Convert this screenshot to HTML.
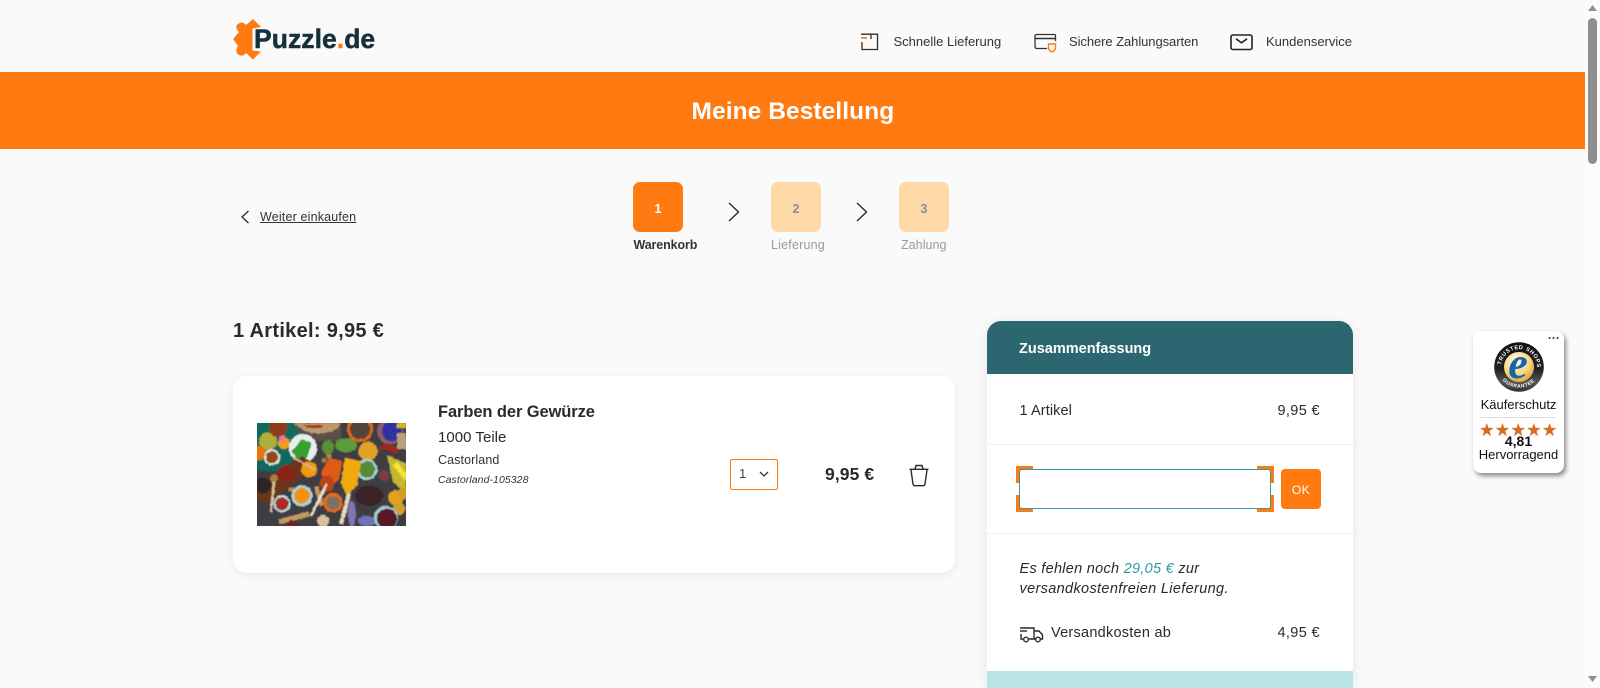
<!DOCTYPE html>
<html lang="de">
<head>
<meta charset="utf-8">
<title>Meine Bestellung - Puzzle.de</title>
<style>
html,body{margin:0;padding:0;width:1600px;height:688px;overflow:hidden;background:#fafafa;font-family:"Liberation Sans",Arial,sans-serif;color:#2a2a2a}
.a{position:absolute;white-space:nowrap}
.t{position:absolute;white-space:nowrap;line-height:1}
svg{position:absolute;display:block;overflow:visible}
#band{left:0;top:72px;width:1585px;height:77px;background:#ff7a10}
.step{width:50px;height:50px;border-radius:7px;text-align:center;line-height:54px;font-size:12.500px;font-weight:bold}
#card{left:233px;top:376px;width:722px;height:197px;background:#fff;border-radius:14px;box-shadow:0 2px 10px rgba(0,0,0,.07)}
#sum{left:987px;top:321px;width:366px;height:367px;background:#fff;border-radius:14px 14px 0 0;box-shadow:0 2px 12px rgba(0,0,0,.09);overflow:hidden}
#sumh{left:987px;top:321px;width:366px;height:53px;background:#2c6771;border-radius:14px 14px 0 0}
#badge{left:1472.500px;top:331px;width:91px;height:142px;background:#fff;border-radius:8px;box-shadow:2px 3px 5px rgba(0,0,0,.45)}
</style>
</head>
<body>
<!-- header -->
<svg style="left:233px;top:19px" width="32" height="41" viewBox="0 0 32 41">
<path fill="#ff7a10" d="M20 0 28 8 19.500 9.500V31.500L28 32.500 20 40.500 13 34Q10 38 6 36 1 33 5 27L0 20 6 13Q1 8 5 5 9 1.500 13 6Z"/>
</svg>
<div class="t" style="left:254px;top:26px;font-size:26.500px;font-weight:bold;color:#17303a;letter-spacing:.05px;-webkit-text-stroke:.5px #17303a">Puzzle<span style="color:#ff7a10;-webkit-text-stroke:.5px #ff7a10">.</span>de</div>

<svg style="left:860px;top:33px" width="19" height="18" viewBox="0 0 19 18" fill="none" stroke="#2d2d2d" stroke-width="1.300">
<path d="M1 1.200H17.500V16.500H2V9"/><path d="M11 1V6"/><path d="M1 5H7" stroke="#ff7a10" stroke-width="1.600"/>
</svg>
<div class="t" style="left:893.500px;top:35px;font-size:13px;letter-spacing:0;color:#333">Schnelle Lieferung</div>
<svg style="left:1034px;top:33px" width="23" height="20" viewBox="0 0 23 20" fill="none" stroke="#333" stroke-width="1.300">
<path d="M13 15.500H3Q1 15.500 1 13.500V3Q1 1.500 3 1.500H20Q21.500 1.500 21.500 3V8"/><path d="M1 5.500H21.500" stroke-width="1.500"/>
<path d="M14.500 11H21.500V15Q21 18 18 19 15 18 14.500 15Z" stroke="#ff7a10" stroke-width="1.400"/>
</svg>
<div class="t" style="left:1069px;top:35px;font-size:13px;letter-spacing:-.07px;color:#333">Sichere Zahlungsarten</div>
<svg style="left:1230px;top:33.500px" width="23" height="16" viewBox="0 0 23 16" fill="none" stroke="#222" stroke-width="1.600">
<rect x="1" y="1" width="21" height="14.500" rx="1.800"/><path d="M6 4.800 11.500 8.800 17 4.800"/>
</svg>
<div class="t" style="left:1266px;top:35px;font-size:13px;letter-spacing:0;color:#333">Kundenservice</div>

<div class="a" id="band"></div>
<h1 class="t" style="margin:0;left:691.500px;top:100px;font-size:24.500px;font-weight:bold;color:#fff;letter-spacing:.08px">Meine Bestellung</h1>

<!-- back link -->
<svg style="left:240px;top:210px" width="10" height="14" viewBox="0 0 10 14" fill="none" stroke="#2a2a2a" stroke-width="1.300"><path d="M8.500 1 2 7 8.500 13"/></svg>
<div class="t" style="left:260px;top:211px;font-size:12.500px;letter-spacing:.17px;color:#333;text-decoration:underline">Weiter einkaufen</div>

<!-- steps -->
<div class="a step" style="left:633px;top:182px;background:#ff7a10;color:#fff">1</div>
<div class="a step" style="left:771px;top:182px;background:#ffd9a8;color:#8f8f8f">2</div>
<div class="a step" style="left:899px;top:182px;background:#ffd9a8;color:#8f8f8f">3</div>
<svg style="left:727px;top:202px" width="14" height="20" viewBox="0 0 14 20" fill="none" stroke="#2a2a2a" stroke-width="1.400"><path d="M2 1 11.500 10 2 19"/></svg>
<svg style="left:855px;top:202px" width="14" height="20" viewBox="0 0 14 20" fill="none" stroke="#2a2a2a" stroke-width="1.400"><path d="M2 1 11.500 10 2 19"/></svg>
<div class="t" style="left:633.500px;top:239px;font-size:12.500px;font-weight:bold;color:#333;letter-spacing:-.12px">Warenkorb</div>
<div class="t" style="left:771px;top:239px;font-size:12.500px;color:#9a9a9a;letter-spacing:.2px">Lieferung</div>
<div class="t" style="left:901px;top:239px;font-size:12.500px;color:#9a9a9a;letter-spacing:.05px">Zahlung</div>

<!-- left column -->
<h2 class="t" style="margin:0;left:233px;top:321px;font-size:20px;font-weight:bold;color:#2a2a2a;letter-spacing:.3px">1 Artikel: 9,95 €</h2>
<div class="a" id="card"></div>

<svg style="left:257px;top:423px" width="149" height="103" viewBox="0 0 149 102" preserveAspectRatio="none">
<defs><clipPath id="c"><rect width="149" height="102"/></clipPath>
<filter id="b" x="-5%" y="-5%" width="110%" height="110%"><feTurbulence type="fractalNoise" baseFrequency=".35" numOctaves="2" seed="4" result="n"/><feDisplacementMap in="SourceGraphic" in2="n" scale="2.500" xChannelSelector="R" yChannelSelector="G"/><feGaussianBlur stdDeviation=".5"/></filter></defs>
<g clip-path="url(#c)"><g filter="url(#b)">
<rect x="-5" y="-5" width="160" height="112" fill="#3c3d42"/>
<rect x="34" y="0" width="50" height="18" fill="#5a5048"/>
<circle cx="13" cy="18" r="30" fill="#0b6a5c"/>
<circle cx="11" cy="18" r="9" fill="#b0ad3c"/><circle cx="21" cy="5" r="9" fill="#8e3a1c"/>
<circle cx="2" cy="30" r="7" fill="#e87410"/><circle cx="15" cy="34" r="8" fill="#e5e5dc"/><circle cx="15" cy="34" r="6" fill="#8f4a14"/>
<circle cx="27" cy="20" r="6" fill="#f59a18"/><circle cx="25" cy="15" r="3" fill="#ee70a0"/>
<path d="M36 0H84L80 6Q65 14 48 8Z" fill="#bc9a6c"/><path d="M46 2H66L64 5H50Z" fill="#a83420"/>
<circle cx="46" cy="25" r="14" fill="#e8eef0"/><path d="M35 28 45 16 55 20 50 34 42 40Z" fill="#38a032"/>
<ellipse cx="71" cy="24" rx="6" ry="7" fill="#5a8f36"/><ellipse cx="89" cy="22" rx="11" ry="7" fill="#5f9a3a"/>
<circle cx="67" cy="37" r="2.500" fill="#9a7a50"/><circle cx="72" cy="33" r="2.500" fill="#a8865c"/>
<circle cx="103" cy="6" r="13" fill="#e06a18"/><circle cx="103" cy="6" r="10" fill="#544438"/>
<circle cx="133" cy="8" r="13" fill="#8f5b66"/><circle cx="135" cy="8" r="10" fill="#2f30a0"/>
<rect x="140" y="0" width="9" height="5" fill="#d0b824"/><rect x="140" y="10" width="9" height="16" fill="#b8a37c"/>
<circle cx="111" cy="28" r="9.500" fill="#dea428"/>
<path d="M122 24Q133 19 142 27L138 30Q130 25 122 26Z" fill="#b81a1a"/>
<circle cx="110" cy="46" r="10.500" fill="#a7d3d8"/><circle cx="110" cy="46" r="8" fill="#588c30"/>
<path d="M0 60 45 33 62 42 12 78 0 78Z" fill="#6a341a"/>
<circle cx="6" cy="62" r="8" fill="#2a2826"/><circle cx="29" cy="50" r="8.500" fill="#8c2018"/>
<circle cx="52" cy="46" r="8" fill="#f09c10"/><path d="M36 34 58 46" stroke="#d8b488" stroke-width="2"/>
<path d="M64 50 72 34 85 38 82 55 72 66Z" fill="#e05c12"/><ellipse cx="70" cy="60" rx="7" ry="8" fill="#b84414"/>
<path d="M88 34 104 38 100 62 90 72 84 60Z" fill="#f0aa10"/>
<circle cx="17" cy="55" r="4" fill="#b27a42"/><path d="M17 58 14 88" stroke="#dbc49c" stroke-width="2.500"/>
<path d="M32 66 44 66" stroke="#b78b58" stroke-width="4"/>
<circle cx="45" cy="72" r="10.500" fill="#a8d6df"/><circle cx="45" cy="72" r="8" fill="#f29208"/>
<path d="M59 63 65 82" stroke="#c49a62" stroke-width="4"/>
<circle cx="25" cy="80" r="8.500" fill="#b9dce2"/><circle cx="25" cy="80" r="6.500" fill="#ac2c22"/>
<path d="M70 60 54 92" stroke="#e9e1cf" stroke-width="2.500"/>
<circle cx="76" cy="79" r="9.500" fill="#ea6a14"/><circle cx="76" cy="79" r="7" fill="#7d7262"/>
<path d="M92 70 84 100" stroke="#e6d7bd" stroke-width="4"/>
<ellipse cx="95" cy="90" rx="4" ry="13" fill="#7e74b8"/><ellipse cx="110" cy="97" rx="9" ry="5" fill="#7073b7"/>
<ellipse cx="112" cy="72" rx="14" ry="10" fill="#3a2028"/><circle cx="127" cy="52" r="6" fill="#4e4d58"/><circle cx="127" cy="52" r="3.500" fill="#a02e22"/>
<path d="M130 32 149 40V70L136 58Z" fill="#c4b830"/><path d="M136 42 149 58V50L140 38Z" fill="#f2e630"/>
<circle cx="139" cy="74" r="7.500" fill="#dea41c"/><circle cx="146" cy="70" r="5.500" fill="#d69a1c"/><circle cx="142" cy="85" r="6" fill="#d2a034"/>
<circle cx="129" cy="94" r="12" fill="#9ccbd0"/><circle cx="130" cy="95" r="10" fill="#581428"/>
<path d="M22 98 52 90" stroke="#c29a62" stroke-width="5"/><circle cx="66" cy="97" r="6" fill="#d9bf9a"/>
<circle cx="35" cy="101" r="5" fill="#6c2028"/>
</g></g>
</svg>

<div class="t" style="left:438px;top:404px;font-size:16.500px;font-weight:bold;color:#2a2a2a;letter-spacing:-.1px">Farben der Gewürze</div>
<div class="t" style="left:438px;top:430px;font-size:15px;color:#2a2a2a;letter-spacing:.03px">1000 Teile</div>
<div class="t" style="left:438px;top:454px;font-size:12.500px;color:#333;letter-spacing:.1px">Castorland</div>
<div class="t" style="left:438px;top:475px;font-size:10.500px;font-style:italic;color:#333;letter-spacing:.07px">Castorland-105328</div>

<div class="a" style="left:730px;top:459px;width:46px;height:29px;border:1px solid #ff7a10;border-radius:2px;background:#fff"></div>
<div class="t" style="left:739px;top:467px;font-size:13px;color:#444">1</div>
<svg style="left:759px;top:471px" width="10" height="6" viewBox="0 0 10 6" fill="none" stroke="#333" stroke-width="1.300"><path d="M1 1 5 5 9 1"/></svg>
<div class="t" style="left:825px;top:465.500px;font-size:17.500px;font-weight:bold;color:#2a2a2a;letter-spacing:.1px">9,95 €</div>
<svg style="left:908px;top:463px" width="22" height="24" viewBox="0 0 22 24" fill="none" stroke="#2a2a2a" stroke-width="1.400">
<path d="M1.500 6.300H20.500"/><path d="M7 6 8 2.500H14L15 6"/><path d="M3 7 5 21Q5.300 22.700 7 22.700H15Q16.700 22.700 17 21L19 7"/>
</svg>

<!-- summary -->
<div class="a" id="sum"></div>
<div class="a" id="sumh"></div>
<div class="t" style="left:1019px;top:341.500px;font-size:14.500px;font-weight:bold;color:#fff;letter-spacing:0">Zusammenfassung</div>
<div class="t" style="left:1019.500px;top:404px;font-size:14.500px;color:#2a2a2a;letter-spacing:.1px">1 Artikel</div>
<div class="t" style="left:1277.500px;top:404px;font-size:14.500px;color:#2a2a2a;letter-spacing:.35px">9,95 €</div>
<div class="a" style="left:987px;top:444px;width:366px;height:1px;background:#eee"></div>

<div class="a" style="left:1016px;top:466px;width:17px;height:17px;background:#ff7a10"></div>
<div class="a" style="left:1257px;top:466px;width:17px;height:17px;background:#ff7a10"></div>
<div class="a" style="left:1016px;top:495px;width:17px;height:17px;background:#ff7a10"></div>
<div class="a" style="left:1257px;top:495px;width:17px;height:17px;background:#ff7a10"></div>
<div class="a" style="left:1019px;top:469px;width:250px;height:38px;border:1px solid #2f9aa3;border-radius:3px;background:#fff"></div>
<div class="a" style="left:1281px;top:469px;width:40px;height:40px;border-radius:4px;background:#ff7a10;color:#fff;font-size:12px;line-height:42px;text-align:center;letter-spacing:.4px">OK</div>
<div class="a" style="left:987px;top:533px;width:366px;height:1px;background:#eee"></div>

<div class="t" style="left:1019.500px;top:562px;font-size:14.500px;font-style:italic;color:#2a2a2a;letter-spacing:.28px">Es fehlen noch <span style="color:#2f9aa3">29,05 €</span> zur</div>
<div class="t" style="left:1019.500px;top:582px;font-size:14.500px;font-style:italic;color:#2a2a2a;letter-spacing:.34px">versandkostenfreien Lieferung.</div>

<svg style="left:1019px;top:626px" width="25" height="17" viewBox="0 0 25 17" fill="none" stroke="#2a2a2a" stroke-width="1.400">
<path d="M1 2H15V13H10"/><path d="M1 5H8"/><path d="M2 8V13H4"/><path d="M15 5H20L23.500 9V13H21.500"/><path d="M15 13H17"/>
<circle cx="7" cy="13.500" r="2.300"/><circle cx="19" cy="13.500" r="2.300"/>
</svg>
<div class="t" style="left:1051px;top:626px;font-size:14.500px;color:#2a2a2a;letter-spacing:.25px">Versandkosten ab</div>
<div class="t" style="left:1277.500px;top:626px;font-size:14.500px;color:#2a2a2a;letter-spacing:.35px">4,95 €</div>
<div class="a" style="left:987px;top:671px;width:366px;height:17px;background:#b9e4e8"></div>

<!-- trusted shops badge -->
<div class="a" id="badge"></div>
<svg style="left:1548px;top:336px" width="11" height="4" viewBox="0 0 11 4" fill="#333"><circle cx="1.500" cy="2" r="1"/><circle cx="5.500" cy="2" r="1"/><circle cx="9.500" cy="2" r="1"/></svg>
<svg style="left:1494px;top:342px" width="50" height="50" viewBox="0 0 50 50">
<defs>
<radialGradient id="g" cx=".4" cy=".3" r=".8"><stop offset="0" stop-color="#fffbe6"/><stop offset=".55" stop-color="#f8d884"/><stop offset="1" stop-color="#dd9a20"/></radialGradient>
<linearGradient id="r" x1="0" y1="0" x2="0" y2="1"><stop offset="0" stop-color="#111"/><stop offset=".55" stop-color="#222"/><stop offset=".8" stop-color="#555"/><stop offset="1" stop-color="#333"/></linearGradient>
<path id="p1" d="M8 31A18 18 0 1 1 42 31"/><path id="p2" d="M3.500 27A21.700 21.700 0 0 0 46.500 27"/>
</defs>
<circle cx="25" cy="25" r="24.800" fill="url(#r)"/>
<circle cx="25" cy="25" r="15" fill="url(#g)"/>
<text font-family="Liberation Sans,sans-serif" font-size="5.600" font-weight="bold" fill="#fff" letter-spacing=".55"><textPath href="#p1" startOffset="12%">TRUSTED SHOPS</textPath></text>
<text font-family="Liberation Sans,sans-serif" font-size="5" font-weight="bold" fill="#fff" letter-spacing=".5"><textPath href="#p2" startOffset="20%">GUARANTEE</textPath></text>
<text x="24" y="36" text-anchor="middle" font-family="Liberation Serif,serif" font-size="44" font-style="italic" font-weight="bold" fill="#1565a8">e</text>
</svg>
<div class="t" style="left:1473px;width:91px;text-align:center;top:398px;font-size:13px;color:#111">Käuferschutz</div>
<div class="a" style="left:1480px;top:417px;width:76px;height:1px;background:#ddd"></div>
<svg style="left:1480px;top:423px" width="77" height="14" viewBox="0 0 77 14" fill="#dd6a24">
<defs><path id="s" d="M6.800 0 8.500 4.900H13.600L9.500 8 11 13.200 6.800 10 2.600 13.200 4.100 8 0 4.900H5.100Z"/></defs>
<use href="#s"/><use href="#s" x="15.700"/><use href="#s" x="31.400"/><use href="#s" x="47.100"/><use href="#s" x="62.800"/>
</svg>
<div class="t" style="left:1473px;width:91px;text-align:center;top:434px;font-size:14px;font-weight:bold;color:#111">4,81</div>
<div class="t" style="left:1473px;width:91px;text-align:center;top:448px;font-size:13px;color:#111">Hervorragend</div>

<!-- scrollbar -->
<div class="a" style="left:1585px;top:0;width:15px;height:688px;background:#fbfbfb"></div>
<div class="a" style="left:1588px;top:18px;width:9px;height:146px;border-radius:5px;background:#8f8f8f"></div>
<svg style="left:1588px;top:5px" width="9" height="6" viewBox="0 0 9 6" fill="#8f8f8f"><path d="M4.500 0 9 6H0Z"/></svg>
<svg style="left:1588px;top:676px" width="9" height="6" viewBox="0 0 9 6" fill="#8f8f8f"><path d="M0 0H9L4.500 6Z"/></svg>
</body>
</html>
